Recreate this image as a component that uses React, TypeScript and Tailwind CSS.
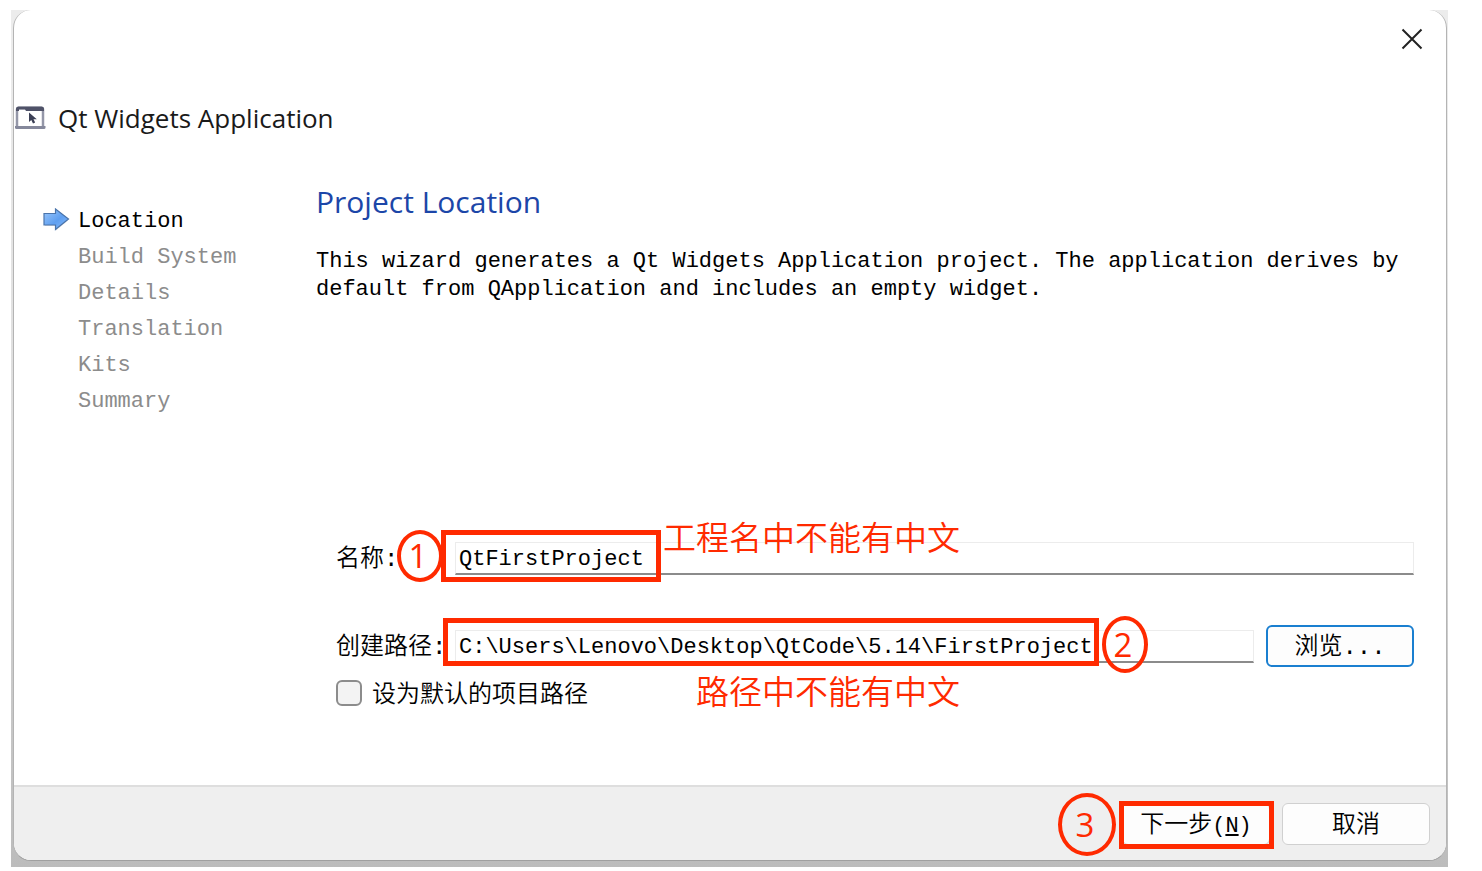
import type { ReactNode } from 'react'

interface Step {
  label: string
  active?: boolean
}

const STEPS: Step[] = [
  { label: 'Location', active: true },
  { label: 'Build System' },
  { label: 'Details' },
  { label: 'Translation' },
  { label: 'Kits' },
  { label: 'Summary' },
]

function WidgetsIcon() {
  return (
    <svg width="32" height="24" viewBox="0 0 32 24" fill="none">
      <path d="M3 20V3.500a1.500 1.500 0 0 1 1.500-1.500h23a1.500 1.500 0 0 1 1.500 1.500V20" stroke="#9497a8" strokeWidth="2.500" />
      <path d="M2 5V3a2.500 2.500 0 0 1 2.500-2.500h23a2.500 2.500 0 0 1 2.500 2.500v2H12l-1-1.500H5V5Z" fill="#4f5268" />
      <path d="M1 20h30.500v1.500a1.500 1.500 0 0 1-1.500 1.500H2.500a1.500 1.500 0 0 1-1.500-1.500Z" fill="#85889b" />
      <path d="M15 6.500v9.500l2.300-2 1.700 3.500 2.200-1-1.700-3.300h3.300Z" fill="#3c4056" />
    </svg>
  )
}

function StepArrow() {
  return (
    <svg width="28" height="26" viewBox="0 0 28 26">
      <defs>
        <linearGradient id="arrow" x1="0" y1="0" x2="1" y2="1">
          <stop offset="0" stopColor="#9cc8fb" />
          <stop offset="0.55" stopColor="#5f9ff0" />
          <stop offset="1" stopColor="#86bbfa" />
        </linearGradient>
      </defs>
      <path d="M3 9h11V4l12 9.500-12 10v-4.500H3Z" fill="#000" opacity="0.13" />
      <path d="M2 6.500h11.500V2L26.500 12 13.500 22.500V18H2Z" fill="url(#arrow)" stroke="#4a74ab" strokeWidth="1.200" />
    </svg>
  )
}

function Marker({ className, children }: { className: string; children: ReactNode }) {
  return (
    <span
      className={`pointer-events-none absolute flex items-center justify-center rounded-[50%] border-4 border-[#ff2a00] pr-1 font-["Open_Sans",sans-serif] text-[33px] leading-none text-[#ff2a00] ${className}`}
    >
      {children}
    </span>
  )
}

function Highlight({ className }: { className: string }) {
  return <span className={`pointer-events-none absolute border-5 border-[#ff2a00] ${className}`} />
}

function Note({ className, children }: { className: string; children: ReactNode }) {
  return (
    <span
      className={`pointer-events-none absolute font-["Noto_Sans_CJK_SC",sans-serif] text-[33px] leading-9 font-[350] whitespace-nowrap text-[#ff2a00] ${className}`}
    >
      {children}
    </span>
  )
}

const INPUT =
  'h-[33px] w-full border border-[#ececec] border-b-2 border-b-[#8b8b8b] bg-white pt-1 pl-[3px] text-[22px] text-black outline-none'
const BUTTON = 'h-[42px] w-[148px] rounded-md border bg-[#fdfdfd] pt-1 text-2xl leading-none font-[350] text-black'

export default function App() {
  return (
    <div className='flex min-h-screen flex-col bg-white pt-2.5 pr-[34px] pb-1 pl-[11px] font-["Liberation_Mono","Noto_Sans_CJK_SC",monospace] text-black'>
      <div className="flex flex-1 flex-col bg-linear-to-b from-[#ececec] from-5% via-[#dcdcdc] to-[#bcbcbc] pr-px pb-1.5 pl-0.5">
        <div className="flex flex-1 flex-col overflow-hidden rounded-[18px] border border-t-0 border-[#b4b4b4] border-b-[#a0a0a0] bg-white">
          <div className="flex h-[58px] items-center justify-end pr-[23px]">
            <button type="button" aria-label="Close" className="flex size-[22px] items-center justify-center">
              <svg width="22" height="22" viewBox="0 0 22 22" fill="none" stroke="#222" strokeWidth="2">
                <path d="M1.500 1.500l19 19M20.500 1.500l-19 19" />
              </svg>
            </button>
          </div>

          <div className="flex h-[100px] items-center gap-3">
            <WidgetsIcon />
            <h1 className='font-["Open_Sans",sans-serif] text-[26px] leading-9 text-[#1a1a1a]'>Qt Widgets Application</h1>
          </div>

          <div className="flex flex-1">
            <ol className="w-[302px] shrink-0 pt-9 pl-7 text-[22px] leading-9">
              {STEPS.map(step => (
                <li key={step.label} className={`flex items-center gap-2 ${step.active ? 'text-black' : 'text-[#8c8c8c]'}`}>
                  <span className="w-7 shrink-0 pb-1">{step.active && <StepArrow />}</span>
                  {step.label}
                </li>
              ))}
            </ol>

            <main className="flex min-w-0 flex-1 flex-col pt-4 pr-8 pb-[76px]">
              <h2 className='font-["Open_Sans",sans-serif] text-[30px] leading-9 text-[#1c46a8]'>Project Location</h2>
              <p className="mt-7 text-[22px] leading-7">
                This wizard generates a Qt Widgets Application project. The application derives by default from QApplication and
                includes an empty widget.
              </p>

              <form className="mt-auto pt-8 pl-5" onSubmit={e => e.preventDefault()}>
                <div className="flex h-[42px] items-center">
                  <label htmlFor="name" className="w-[119px] shrink-0 pt-1 text-2xl font-[350]">
                    名称:
                  </label>
                  <div className="relative flex-1">
                    <input id="name" type="text" defaultValue="QtFirstProject" className={INPUT} />
                    <Marker className="-top-3 -left-[58px] h-[52px] w-[46px]">1</Marker>
                    <Highlight className="-top-3 -left-3.5 h-[52px] w-[220px]" />
                    <Note className="-top-6 left-[208px]">工程名中不能有中文</Note>
                  </div>
                </div>

                <div className="mt-[46px] flex h-[42px] items-center gap-3">
                  <div className="flex flex-1 items-center">
                    <label htmlFor="path" className="w-[119px] shrink-0 pt-1 text-2xl font-[350]">
                      创建路径:
                    </label>
                    <div className="relative flex-1">
                      <input
                        id="path"
                        type="text"
                        defaultValue="C:\Users\Lenovo\Desktop\QtCode\5.14\FirstProject"
                        className={INPUT}
                      />
                      <Highlight className="-top-3 -left-3 h-12 w-[656px]" />
                      <Marker className="-top-3.5 left-[647px] h-[57px] w-[46px]">2</Marker>
                      <Note className="top-[42px] left-[241px]">路径中不能有中文</Note>
                    </div>
                  </div>
                  <button type="button" className={`${BUTTON} border-2 border-[#1a7fd0]`}>
                    浏览...
                  </button>
                </div>

                <div className="mt-2.5 flex h-8 items-center gap-2.5">
                  <input
                    id="default-path"
                    type="checkbox"
                    className="size-[26px] appearance-none rounded-md border-2 border-[#8c8c8c] bg-[#f3f3f3]"
                  />
                  <label htmlFor="default-path" className="pt-1.5 text-2xl font-[350]">
                    设为默认的项目路径
                  </label>
                </div>
              </form>
            </main>
          </div>

          <footer className="flex h-[75px] items-center justify-end gap-3 border-t-2 border-[#dedede] bg-[#efefef] pr-4">
            <div className="relative">
              <button type="button" className={`${BUTTON} border-[#d0d0d0]`}>
                下一步<span className="text-[22px]">(<u>N</u>)</span>
              </button>
              <Marker className="-top-2.5 -left-16 h-[63px] w-[58px]">3</Marker>
              <Highlight className="-top-0.5 -left-[3px] h-12 w-[155px]" />
            </div>
            <button type="button" className={`${BUTTON} border-[#d0d0d0]`}>
              取消
            </button>
          </footer>
        </div>
      </div>
    </div>
  )
}
